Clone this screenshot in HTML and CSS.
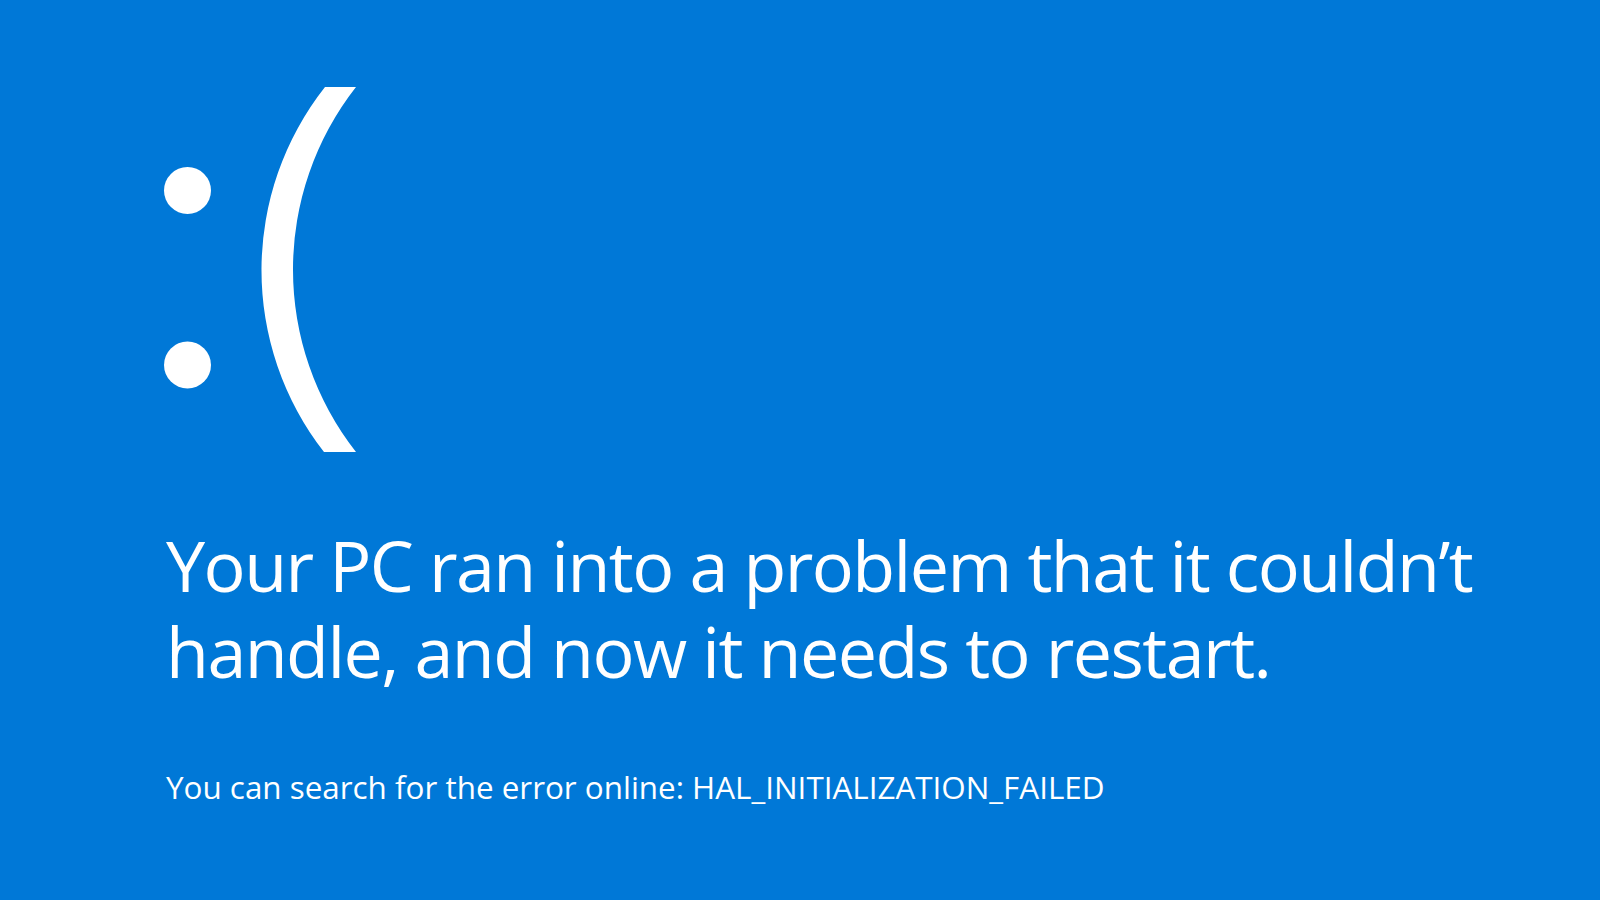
FILE: index.html
```html
<!DOCTYPE html>
<html lang="en">
<head>
    <meta charset="UTF-8">
    <meta name="viewport" content="width=device-width, initial-scale=1.0">
    <title>Your PC ran into a problem</title>
    <link rel="stylesheet" href="styles.css">
</head>
<body>
    <div class="screen">
        <!-- the big sad face -->
        <svg class="face" width="200" height="380" viewBox="0 0 200 380" aria-label=":(">
            <circle cx="27.5" cy="110.5" r="23.5" fill="#fff"/>
            <circle cx="27.5" cy="285" r="23.5" fill="#fff"/>
            <path d="M 165 7 A 295.8 295.8 0 0 0 164 372 L 196 372 A 295.8 295.8 0 0 1 196 7 Z" fill="#fff"/>
        </svg>

        <h1 class="message">Your PC ran into a problem that it couldn’t<br>handle, and now it needs to restart.</h1>

        <p class="stop-code">You can search for the error online: HAL_INITIALIZATION_FAILED</p>
    </div>
</body>
</html>
```

FILE: styles.css
```css
html, body {
    margin: 0;
    height: 100%;
}
body {
    background-color: #0078d7;
    color: #fff;
    font-family: "Open Sans", "Noto Sans", "DejaVu Sans", sans-serif;
    overflow: hidden;
}
.screen {
    padding: 80px 0 0 160px;
}
.face {
    display: block;
}
.message {
    margin: 62px 0 0 6px;
    font-size: 70px;
    font-weight: 400;
    line-height: 86px;
    letter-spacing: -1.55px;
}
.stop-code {
    margin: 73px 0 0 6px;
    font-size: 31.4px;
    font-weight: 400;
    line-height: 40px;
}
```
